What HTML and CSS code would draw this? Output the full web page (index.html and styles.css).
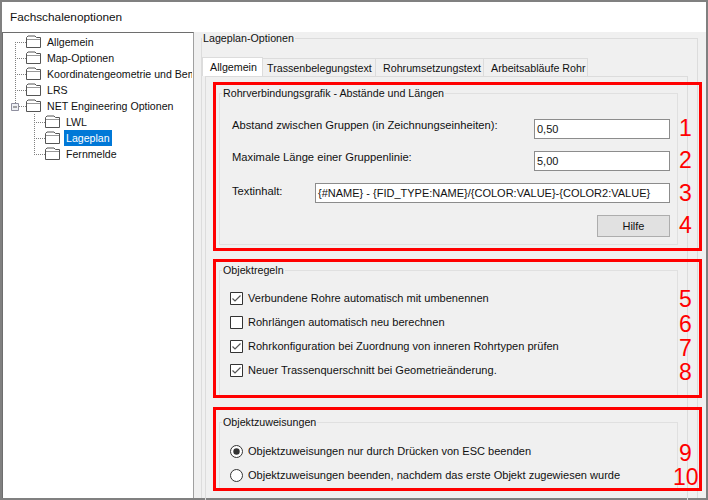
FILE: index.html
```html
<!DOCTYPE html>
<html lang="de">
<head>
<meta charset="utf-8">
<title>Fachschalenoptionen</title>
<link rel="stylesheet" href="styles.css">
</head>
<body>
<div class="window">
  <header class="titlebar">Fachschalenoptionen</header>
  <div class="main">
    <nav class="tree">
      <div class="row"><svg class="glyph" width="44" height="16" viewBox="0 0 44 16"><path class="dot" d="M15.500 8V16M15 8.500H26"/><path class="folder" d="M26.500 13.500V3.500L28 2H35L36.500 3.500H40.500V13.500Z"/><path class="fold" d="M27 5.500H40"/></svg><span class="label">Allgemein</span></div>
      <div class="row"><svg class="glyph" width="44" height="16" viewBox="0 0 44 16"><path class="dot" d="M15.500 0V16M15 8.500H26"/><path class="folder" d="M26.500 13.500V3.500L28 2H35L36.500 3.500H40.500V13.500Z"/><path class="fold" d="M27 5.500H40"/></svg><span class="label">Map-Optionen</span></div>
      <div class="row"><svg class="glyph" width="44" height="16" viewBox="0 0 44 16"><path class="dot" d="M15.500 0V16M15 8.500H26"/><path class="folder" d="M26.500 13.500V3.500L28 2H35L36.500 3.500H40.500V13.500Z"/><path class="fold" d="M27 5.500H40"/></svg><span class="label">Koordinatengeometrie und Bem</span></div>
      <div class="row"><svg class="glyph" width="44" height="16" viewBox="0 0 44 16"><path class="dot" d="M15.500 0V16M15 8.500H26"/><path class="folder" d="M26.500 13.500V3.500L28 2H35L36.500 3.500H40.500V13.500Z"/><path class="fold" d="M27 5.500H40"/></svg><span class="label">LRS</span></div>
      <div class="row"><svg class="glyph" width="44" height="16" viewBox="0 0 44 16"><path class="dot" d="M15.500 0V5M19 8.500H26"/><path class="expander" d="M11.500 5.500H18.500V12.500H11.500Z"/><path class="minus" d="M13 9H17"/><path class="folder" d="M26.500 13.500V3.500L28 2H35L36.500 3.500H40.500V13.500Z"/><path class="fold" d="M27 5.500H40"/></svg><span class="label">NET Engineering Optionen</span></div>
      <div class="row"><svg class="glyph" width="63" height="16" viewBox="0 0 63 16"><path class="dot" d="M34.500 0V16M34 8.500H45"/><path class="folder" d="M45.500 13.500V3.500L47 2H54L55.500 3.500H59.500V13.500Z"/><path class="fold" d="M46 5.500H59"/></svg><span class="label">LWL</span></div>
      <div class="row"><svg class="glyph" width="63" height="16" viewBox="0 0 63 16"><path class="dot" d="M34.500 0V16M34 8.500H45"/><path class="folder" d="M45.500 13.500V3.500L47 2H54L55.500 3.500H59.500V13.500Z"/><path class="fold" d="M46 5.500H59"/></svg><span class="label selected">Lageplan</span></div>
      <div class="row"><svg class="glyph" width="63" height="16" viewBox="0 0 63 16"><path class="dot" d="M34.500 0V8M34 8.500H45"/><path class="folder" d="M45.500 13.500V3.500L47 2H54L55.500 3.500H59.500V13.500Z"/><path class="fold" d="M46 5.500H59"/></svg><span class="label">Fernmelde</span></div>
    </nav>
    <section class="options">
      <fieldset class="outer">
        <legend>Lageplan-Optionen</legend>
        <div class="tabs">
          <span class="tab active">Allgemein</span>
          <span class="tab tab-a">Trassenbelegungstext</span>
          <span class="tab tab-b">Rohrumsetzungstext</span>
          <span class="tab tab-c">Arbeitsabläufe Rohr</span>
        </div>
        <div class="panel">
          <fieldset class="group group-graphic">
            <legend>Rohrverbindungsgrafik - Abstände und Längen</legend>
            <div class="field f1"><label>Abstand zwischen Gruppen (in Zeichnungseinheiten):</label><span class="input short">0,50</span></div>
            <div class="field f2"><label>Maximale Länge einer Gruppenlinie:</label><span class="input short">5,00</span></div>
            <div class="field f3"><label>Textinhalt:</label><span class="input long">{#NAME} - {FID_TYPE:NAME}/{COLOR:VALUE}-{COLOR2:VALUE}</span></div>
            <div class="actions"><span class="button">Hilfe</span></div>
          </fieldset>
          <fieldset class="group group-rules">
            <legend>Objektregeln</legend>
            <div class="check"><svg class="box" width="13" height="13" viewBox="0 0 13 13"><path class="box-frame" d="M.5.500H12.500V12.500H.5Z"/><path class="tick" d="M2.500 6.500L5 9L10.500 3.500"/></svg><span>Verbundene Rohre automatisch mit umbenennen</span></div>
            <div class="check"><svg class="box" width="13" height="13" viewBox="0 0 13 13"><path class="box-frame" d="M.5.500H12.500V12.500H.5Z"/></svg><span>Rohrlängen automatisch neu berechnen</span></div>
            <div class="check"><svg class="box" width="13" height="13" viewBox="0 0 13 13"><path class="box-frame" d="M.5.500H12.500V12.500H.5Z"/><path class="tick" d="M2.500 6.500L5 9L10.500 3.500"/></svg><span>Rohrkonfiguration bei Zuordnung von inneren Rohrtypen prüfen</span></div>
            <div class="check"><svg class="box" width="13" height="13" viewBox="0 0 13 13"><path class="box-frame" d="M.5.500H12.500V12.500H.5Z"/><path class="tick" d="M2.500 6.500L5 9L10.500 3.500"/></svg><span>Neuer Trassenquerschnitt bei Geometrieänderung.</span></div>
          </fieldset>
          <fieldset class="group group-assign">
            <legend>Objektzuweisungen</legend>
            <div class="check"><svg class="box" width="13" height="13" viewBox="0 0 13 13"><circle class="radio" cx="6.500" cy="6.500" r="6"/><circle class="radio-dot" cx="6.500" cy="6.500" r="3.200"/></svg><span>Objektzuweisungen nur durch Drücken von ESC beenden</span></div>
            <div class="check"><svg class="box" width="13" height="13" viewBox="0 0 13 13"><circle class="radio" cx="6.500" cy="6.500" r="6"/></svg><span>Objektzuweisungen beenden, nachdem das erste Objekt zugewiesen wurde</span></div>
          </fieldset>
        </div>
      </fieldset>
    </section>
  </div>
  <div class="mark mark-a"></div>
  <div class="mark mark-b"></div>
  <div class="mark mark-c"></div>
  <span class="num n1">1</span><span class="num n2">2</span><span class="num n3">3</span><span class="num n4">4</span><span class="num n5">5</span><span class="num n6">6</span><span class="num n7">7</span><span class="num n8">8</span><span class="num n9">9</span><span class="num n10">10</span>
</div>
</body>
</html>
```

FILE: styles.css
```css
* { box-sizing: border-box; }
html, body { margin: 0; height: 100%; overflow: hidden; }
body { font: 10.7px/16px "Liberation Sans", Arial, sans-serif; color: #111; background: #f0f0f0; }
.window { position: relative; width: 708px; height: 500px; display: flex; flex-direction: column; border: 2px solid #808080; }
.titlebar { height: 30px; background: #fff; padding: 7px 8px 0; font-size: 11.8px; flex: none; }
.main { flex: 1; display: flex; min-height: 0; background: #f0f0f0; }
.tree { width: 192px; flex: none; background: #fff; border: 1px solid #6e6e6e; border-right-color: #a0a0a0; border-bottom: 0; padding-top: 1px; overflow: hidden; font-size: 10.6px; }
.row { display: flex; height: 16px; align-items: center; white-space: nowrap; overflow: hidden; margin-right: 1px; }
.glyph { flex: none; margin-left: -3px; margin-right: 1px; }
.dot { fill: none; stroke: #808080; stroke-width: 1; stroke-dasharray: 1 1; }
.folder { fill: #fff; stroke: #555; stroke-width: 1; }
.fold { fill: none; stroke: #999; stroke-width: 1; }
.expander { fill: #eef0f4; stroke: #8f8f9f; stroke-width: 1; }
.minus { stroke: #555; stroke-width: 1; }
.label { padding: 0 2px; height: 16px; line-height: 16px; }
.selected { background: #0078d7; color: #fff; }
.options { flex: 1; min-width: 0; padding: 0 8px 0 7px; }
fieldset { margin: 0; min-width: 0; }
.outer { height: 100%; border: 1px solid #dcdcdc; border-bottom: 0; padding: 0 9px 0 0; }
.outer > legend { padding: 0 1px; line-height: 12px; }
.tabs { display: flex; height: 19px; margin-top: 13px; align-items: flex-end; }
.tab { height: 18px; border: 1px solid #dcdcdc; border-left: 0; border-bottom: 0; padding-top: 1px; white-space: nowrap; background: #f0f0f0; }
.tab.active { height: 19px; width: 61px; padding: 1px 0 0 7px; background: #fff; border-left: 1px solid #dcdcdc; }
.tab-a { width: 113px; padding-left: 4px; }
.tab-b { width: 108px; padding-left: 7px; }
.tab-c { width: 104px; padding-left: 7px; }
.panel { height: 430px; border: 1px solid #dcdcdc; border-bottom: 0; padding: 8px 9px 0 13px; margin-left: 3px; }
.group { border: 1px solid #e0e0e0; padding: 0 7px 0 2px; }
.group > legend { padding: 0 1px; line-height: 16px; }
.group-graphic { height: 160px; }
.group-rules { height: 135px; margin-top: 17px; }
.group-assign { height: 76px; margin-top: 17px; }
.field { display: flex; justify-content: space-between; align-items: flex-start; height: 20px; font-size: 11.2px; padding-left: 10px; }
.field label { margin-top: -2px; }
.f1 { margin-top: 18px; }
.f2, .f3 { margin-top: 12px; }
.f3 label { margin-top: 0; flex: none; }
.input { background: #fff; border: 1px solid #8c8c8c; height: 20px; padding: 0 2px; line-height: 18px; font-size: 11px; white-space: nowrap; overflow: hidden; }
.short { width: 136px; }
.long { width: 355px; }
.actions { display: flex; justify-content: flex-end; margin-top: 12px; }
.button { width: 73px; height: 22px; background: #e1e1e1; border: 1px solid #adadad; text-align: center; line-height: 20px; font-size: 11px; }
.check { display: flex; align-items: center; gap: 5px; height: 24px; margin-left: 8px; font-size: 11.05px; white-space: nowrap; }
.group-rules .check:first-of-type { margin-top: 8px; }
.group-assign .check:first-of-type { margin-top: 9px; }
.box { flex: none; }
.box-frame { fill: #fff; stroke: #333; stroke-width: 1; }
.tick { fill: none; stroke: #555; stroke-width: 1.200; }
.radio { fill: #fff; stroke: #333; stroke-width: 1; }
.radio-dot { fill: #333; }
.mark { position: absolute; border: 3px solid #f00; left: 211px; width: 489px; }
.mark-a { top: 80px; height: 169px; }
.mark-b { top: 257px; height: 139px; }
.mark-c { top: 405px; height: 84px; }
.num { position: absolute; color: #f00; font-size: 23px; line-height: 20px; left: 677px; }
.n1 { top: 116px; } .n2 { top: 148px; } .n3 { top: 181px; } .n4 { top: 213px; }
.n5 { top: 287px; } .n6 { top: 312px; } .n7 { top: 336px; } .n8 { top: 360px; }
.n9 { top: 441px; } .n10 { top: 465px; left: 671px; }
```
